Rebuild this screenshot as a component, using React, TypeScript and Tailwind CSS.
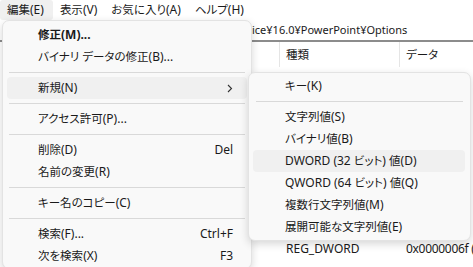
import React from "react";

const font =
  "font-['Segoe_UI','Noto_Sans','Noto_Sans_CJK_JP',sans-serif] [font-feature-settings:'palt']";

type Item =
  | { sep: true }
  | { label: string; key?: string; bold?: boolean; hot?: boolean; sub?: boolean };

const mainItems: Item[] = [
  { label: "修正(M)...", bold: true },
  { label: "バイナリ データの修正(B)..." },
  { sep: true },
  { label: "新規(N)", hot: true, sub: true },
  { sep: true },
  { label: "アクセス許可(P)..." },
  { sep: true },
  { label: "削除(D)", key: "Del" },
  { label: "名前の変更(R)" },
  { sep: true },
  { label: "キー名のコピー(C)" },
  { sep: true },
  { label: "検索(F)...", key: "Ctrl+F" },
  { label: "次を検索(X)", key: "F3" },
];

const subItems: Item[] = [
  { label: "キー(K)" },
  { sep: true },
  { label: "文字列値(S)" },
  { label: "バイナリ値(B)" },
  { label: "DWORD (32 ビット) 値(D)", hot: true },
  { label: "QWORD (64 ビット) 値(Q)" },
  { label: "複数行文字列値(M)" },
  { label: "展開可能な文字列値(E)" },
];

// japanese runs are set a touch smaller, the latin ones stay at 12px
function Jp({ text }: { text: string }) {
  const parts = text.split(/([\u3000-\u30ff\u4e00-\u9fff]+)/);
  return (
    <>
      {parts.map((p, i) =>
        i % 2 ? (
          <span key={i} className="text-[11.5px]">
            {p}
          </span>
        ) : (
          p
        )
      )}
    </>
  );
}

function Chevron() {
  return (
    <svg width="6" height="9" viewBox="0 0 6 9" className="text-[#333]">
      <path d="M1 1l3.5 3.5L1 8" fill="none" stroke="currentColor" strokeWidth="1.1" />
    </svg>
  );
}

function Menu({ items, pad, sepX }: { items: Item[]; pad: string; sepX: string }) {
  return (
    <div className="flex flex-col">
      {items.map((it, i) =>
        "sep" in it ? (
          <div key={i} className={`flex h-[9px] items-center ${sepX}`}>
            <div className="h-px w-full bg-[#d9d9d9]" />
          </div>
        ) : (
          <div
            key={i}
            className={`flex h-[22px] items-center rounded-[4px] ${pad} ${it.hot ? "bg-[#f0f0f0]" : ""} ${it.bold ? "font-bold" : ""}`}
          >
            <span className="flex-1 whitespace-nowrap">
              <Jp text={it.label} />
            </span>
            {it.key && <span>{it.key}</span>}
            {it.sub && <Chevron />}
          </div>
        )
      )}
    </div>
  );
}

export default function App() {
  return (
    <div className={`relative h-[267px] w-[473px] overflow-hidden bg-white text-[12px] text-[#1a1a1a] ${font}`}>
      {/* menu bar */}
      <div className="flex h-[20px] items-stretch">
        <div className="flex items-center rounded-[3px] bg-[#f0f0f0] pl-[7px] pr-[9px]">
          <Jp text="編集(E)" />
        </div>
        <div className="flex items-center px-[7px]">
          <Jp text="表示(V)" />
        </div>
        <div className="flex items-center px-[7px]">
          <Jp text="お気に入り(A)" />
        </div>
        <div className="flex items-center px-[7px]">
          <Jp text="ヘルプ(H)" />
        </div>
      </div>

      {/* address bar */}
      <div className="flex h-[20px] items-center whitespace-nowrap pl-[252px] text-[11px]">
        ice¥16.0¥PowerPoint¥Options
      </div>
      <div className="h-[2px] bg-[#8c8c8c]" />

      {/* column header */}
      <div className="flex h-[25px]">
        <div className="w-[280px] border-r border-[#e5e5e5]" />
        <div className="w-[120px] border-r border-[#e5e5e5] pl-[6px] leading-[25px]">
          <Jp text="種類" />
        </div>
        <div className="flex-1 pl-[6px] leading-[25px]">
          <Jp text="データ" />
        </div>
      </div>

      {/* list rows, mostly hidden by the menus */}
      <div className="flex flex-col pt-[171px]">
        <div className="flex h-[21px] items-center whitespace-nowrap">
          <div className="w-[286px] shrink-0" />
          <div className="w-[120px] shrink-0">REG_DWORD</div>
          <div className="shrink-0 tracking-[-0.3px]">0x0000006f (111)</div>
        </div>
      </div>

      {/* main dropdown */}
      <div className="absolute left-[2px] top-[20px] w-[250px] rounded-[7px] border border-[#e3e3e3] bg-[#f9f9f9] pb-[1px] pt-[3px] shadow-[0_3px_8px_rgba(0,0,0,0.16)]">
        <Menu items={mainItems} pad="mx-[4px] pl-[31px] pr-[14px]" sepX="mx-[6px]" />
      </div>

      {/* submenu */}
      <div className="absolute left-[248px] top-[72px] w-[223px] rounded-[7px] border border-[#e3e3e3] bg-[#f9f9f9] pb-[2px] pt-[2px] shadow-[0_3px_8px_rgba(0,0,0,0.16)]">
        <Menu items={subItems} pad="ml-[4px] mr-[5px] pl-[32px] pr-[10px]" sepX="mx-[7px]" />
      </div>
    </div>
  );
}
